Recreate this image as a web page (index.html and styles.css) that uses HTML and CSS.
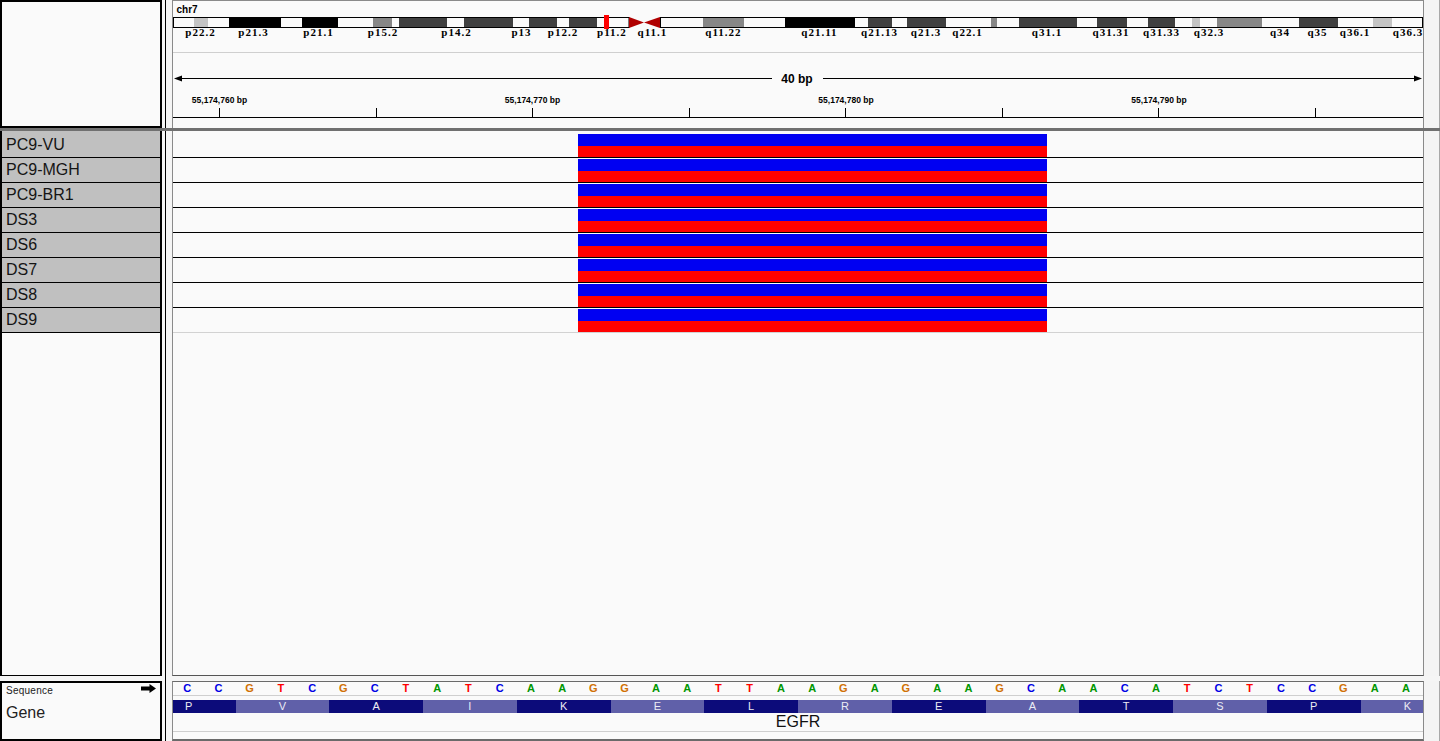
FILE: index.html
```html
<!DOCTYPE html>
<html lang="en">
<head>
<meta charset="utf-8">
<title>IGV - chr7 EGFR</title>
<link rel="stylesheet" href="styles.css">
</head>
<body>
<div class="igv">
  <!-- header row -->
  <div class="name-box header-names"></div>
  <div class="attr"></div>
  <div class="data-box header-data">
    <svg class="header-svg" width="1250" height="127" viewBox="173 1 1250 127" xmlns="http://www.w3.org/2000/svg">
      <text class="chr-label" x="176.5" y="13">chr7</text>
      <g class="bands">
        <rect x="194" y="18" width="14" height="9" fill="#c4c4c4"/>
        <rect x="229" y="18" width="52" height="9" fill="#000"/>
        <rect x="302" y="18" width="36" height="9" fill="#000"/>
        <rect x="373" y="18" width="19" height="9" fill="#878787"/>
        <rect x="399" y="18" width="48" height="9" fill="#404040"/>
        <rect x="464" y="18" width="49" height="9" fill="#404040"/>
        <rect x="529" y="18" width="28" height="9" fill="#404040"/>
        <rect x="569" y="18" width="28" height="9" fill="#404040"/>
        <rect x="703" y="18" width="41" height="9" fill="#878787"/>
        <rect x="785" y="18" width="70" height="9" fill="#000"/>
        <rect x="868" y="18" width="24" height="9" fill="#404040"/>
        <rect x="907" y="18" width="39" height="9" fill="#404040"/>
        <rect x="991" y="18" width="6" height="9" fill="#878787"/>
        <rect x="1019" y="18" width="58" height="9" fill="#404040"/>
        <rect x="1097" y="18" width="30" height="9" fill="#404040"/>
        <rect x="1148" y="18" width="27" height="9" fill="#404040"/>
        <rect x="1192" y="18" width="8" height="9" fill="#c4c4c4"/>
        <rect x="1217" y="18" width="45" height="9" fill="#878787"/>
        <rect x="1299" y="18" width="39" height="9" fill="#404040"/>
        <rect x="1373" y="18" width="19" height="9" fill="#c4c4c4"/>
      </g>
      <rect x="173.5" y="17.5" width="455.5" height="10" fill="none" stroke="#000"/>
      <rect x="660.5" y="17.5" width="762" height="10" fill="none" stroke="#000"/>
      <polygon points="629,17 629,28 644,22.5" fill="#b00000"/>
      <polygon points="660,17 660,28 644,22.5" fill="#b00000"/>
      <rect x="604" y="15" width="5" height="14" fill="#ff0000"/>
      <g class="band-label">
        <text x="200.5" y="36">p22.2</text>
        <text x="253.5" y="36">p21.3</text>
        <text x="318.5" y="36">p21.1</text>
        <text x="383" y="36">p15.2</text>
        <text x="456.5" y="36">p14.2</text>
        <text x="521.5" y="36">p13</text>
        <text x="563" y="36">p12.2</text>
        <text x="612" y="36">p11.2</text>
        <text x="652.5" y="36">q11.1</text>
        <text x="723.5" y="36">q11.22</text>
        <text x="819.5" y="36">q21.11</text>
        <text x="879.5" y="36">q21.13</text>
        <text x="926" y="36">q21.3</text>
        <text x="967.5" y="36">q22.1</text>
        <text x="1047" y="36">q31.1</text>
        <text x="1111" y="36">q31.31</text>
        <text x="1161.5" y="36">q31.33</text>
        <text x="1209" y="36">q32.3</text>
        <text x="1280" y="36">q34</text>
        <text x="1317.5" y="36">q35</text>
        <text x="1355" y="36">q36.1</text>
        <text x="1408" y="36">q36.3</text>
      </g>
      <line x1="173" y1="52.5" x2="1423" y2="52.5" stroke="#cfcfcf"/>
      <line x1="176" y1="78.5" x2="772" y2="78.5" stroke="#000"/>
      <line x1="823" y1="78.5" x2="1420" y2="78.5" stroke="#000"/>
      <polygon points="174,78.5 182,75.5 182,81.5" fill="#000"/>
      <polygon points="1422,78.5 1414,75.5 1414,81.5" fill="#000"/>
      <text class="span-label" x="797" y="82.5">40 bp</text>
      <g class="tick-label">
        <text x="219.5" y="102.5">55,174,760 bp</text>
        <text x="532.5" y="102.5">55,174,770 bp</text>
        <text x="846" y="102.5">55,174,780 bp</text>
        <text x="1159" y="102.5">55,174,790 bp</text>
      </g>
      <g stroke="#000">
        <line x1="219.5" y1="108" x2="219.5" y2="117"/>
        <line x1="376.5" y1="108" x2="376.5" y2="117"/>
        <line x1="532.5" y1="108" x2="532.5" y2="117"/>
        <line x1="689.5" y1="108" x2="689.5" y2="117"/>
        <line x1="845.5" y1="108" x2="845.5" y2="117"/>
        <line x1="1002.5" y1="108" x2="1002.5" y2="117"/>
        <line x1="1158.5" y1="108" x2="1158.5" y2="117"/>
        <line x1="1315.5" y1="108" x2="1315.5" y2="117"/>
        <line x1="173" y1="117.5" x2="1423" y2="117.5"/>
      </g>
    </svg>
  </div>
  <div class="scroll"></div>

  <div class="divider"></div>

  <!-- tracks row -->
  <div class="name-box track-names">
    <div class="track-label">PC9-VU</div>
    <div class="track-label">PC9-MGH</div>
    <div class="track-label">PC9-BR1</div>
    <div class="track-label">DS3</div>
    <div class="track-label">DS6</div>
    <div class="track-label">DS7</div>
    <div class="track-label">DS8</div>
    <div class="track-label">DS9</div>
  </div>
  <div class="attr"></div>
  <div class="data-box track-data">
    <div class="track-row"><div class="feature"><div class="f-top"></div><div class="f-bot"></div></div></div>
    <div class="track-row"><div class="feature"><div class="f-top"></div><div class="f-bot"></div></div></div>
    <div class="track-row"><div class="feature"><div class="f-top"></div><div class="f-bot"></div></div></div>
    <div class="track-row"><div class="feature"><div class="f-top"></div><div class="f-bot"></div></div></div>
    <div class="track-row"><div class="feature"><div class="f-top"></div><div class="f-bot"></div></div></div>
    <div class="track-row"><div class="feature"><div class="f-top"></div><div class="f-bot"></div></div></div>
    <div class="track-row"><div class="feature"><div class="f-top"></div><div class="f-bot"></div></div></div>
    <div class="track-row"><div class="feature"><div class="f-top"></div><div class="f-bot"></div></div></div>
  </div>
  <div class="scroll"></div>

  <!-- gap row -->
  <div class="gap"></div>
  <div class="attr"></div>
  <div class="gap"></div>
  <div class="gap"></div>

  <!-- feature row -->
  <div class="name-box feature-names">
    <div class="seq-name">
      <span class="seq-title">Sequence</span>
      <svg class="strand-arrow" width="15" height="9" viewBox="0 0 15 9" xmlns="http://www.w3.org/2000/svg"><path d="M0 2.5 H8.5 V0 L15 4.5 L8.5 9 V6.5 H0 Z" fill="#000"/></svg>
    </div>
    <div class="gene-title">Gene</div>
  </div>
  <div class="attr"></div>
  <div class="data-box feature-data">
    <div class="seq">
      <span class="nt-c">C</span><span class="nt-c">C</span><span class="nt-g">G</span><span class="nt-t">T</span><span class="nt-c">C</span><span class="nt-g">G</span><span class="nt-c">C</span><span class="nt-t">T</span><span class="nt-a">A</span><span class="nt-t">T</span>
      <span class="nt-c">C</span><span class="nt-a">A</span><span class="nt-a">A</span><span class="nt-g">G</span><span class="nt-g">G</span><span class="nt-a">A</span><span class="nt-a">A</span><span class="nt-t">T</span><span class="nt-t">T</span><span class="nt-a">A</span>
      <span class="nt-a">A</span><span class="nt-g">G</span><span class="nt-a">A</span><span class="nt-g">G</span><span class="nt-a">A</span><span class="nt-a">A</span><span class="nt-g">G</span><span class="nt-c">C</span><span class="nt-a">A</span><span class="nt-a">A</span>
      <span class="nt-c">C</span><span class="nt-a">A</span><span class="nt-t">T</span><span class="nt-c">C</span><span class="nt-t">T</span><span class="nt-c">C</span><span class="nt-c">C</span><span class="nt-g">G</span><span class="nt-a">A</span><span class="nt-a">A</span>
    </div>
    <div class="gene-bar">
      <div class="codons">
        <span class="aa dark">P</span><span class="aa light">V</span><span class="aa dark">A</span><span class="aa light">I</span><span class="aa dark">K</span><span class="aa light">E</span><span class="aa dark">L</span><span class="aa light">R</span><span class="aa dark">E</span><span class="aa light">A</span><span class="aa dark">T</span><span class="aa light">S</span><span class="aa dark">P</span><span class="aa light">K</span>
      </div>
    </div>
    <div class="gene-name">EGFR</div>
  </div>
  <div class="scroll"></div>
</div>
</body>
</html>
```

FILE: styles.css
```css
* { box-sizing: border-box; }

html, body {
  margin: 0;
  padding: 0;
}

body {
  width: 1440px;
  height: 741px;
  overflow: hidden;
  background: #f5f5f5;
  font-family: "Liberation Sans", Arial, sans-serif;
  color: #111;
}

.igv {
  display: grid;
  grid-template-columns: 162px 10px 1252px 16px;
  grid-template-rows: 128px 3px 545px 5px 60px;
  width: 1440px;
  height: 741px;
}

/* panels */
.name-box {
  background: #fafafa;
  border-left: 2px solid #000;
  border-right: 2px solid #000;
}

.header-names {
  border-top: 2px solid #000;
  border-bottom: 2px solid #000;
}

.attr {
  background: linear-gradient(to right, transparent 3px, #000 3px, #000 4px, transparent 4px);
}

.data-box {
  background: #fafafa;
  border-left: 1px solid #8a8a8a;
  border-right: 1px solid #8a8a8a;
}

.header-data {
  border-top: 1px solid #8a8a8a;
}

.header-svg {
  display: block;
}

.scroll {
  background: #f4f4f4;
  border-right: 1px solid #a8a8a8;
}

.divider {
  grid-column: 1 / -1;
  background: #707070;
}

.gap {
  background: #f5f5f5;
}

/* svg text */
.chr-label {
  font: bold 10px "Liberation Sans", Arial, sans-serif;
  fill: #000;
}

.band-label text {
  font: bold 11px "Liberation Serif", "Times New Roman", serif;
  letter-spacing: 1px;
  text-anchor: middle;
  fill: #000;
}

.span-label {
  font: bold 12px "Liberation Sans", Arial, sans-serif;
  text-anchor: middle;
  fill: #000;
}

.tick-label text {
  font: bold 8.5px "Liberation Sans", Arial, sans-serif;
  text-anchor: middle;
  fill: #000;
}

/* tracks */
.track-names {
  border-bottom: 1px solid #000;
}

.track-label {
  height: 25px;
  background: #c0c0c0;
  border-bottom: 1px solid #000;
  padding-left: 4px;
  font-size: 16px;
  line-height: 23px;
  color: #151515;
  white-space: nowrap;
}

.track-label:first-child {
  height: 27px;
  padding-top: 2px;
}

.track-data {
  border-bottom: 1px solid #555;
  padding-top: 2px;
}

.track-row {
  height: 25px;
  padding-top: 1px;
  border-bottom: 1px solid #000;
}

.track-row:last-child {
  border-bottom-color: #d2d2d2;
}

.feature {
  margin-left: 405px;
  width: 469px;
}

.f-top {
  height: 12px;
  background: #0000f2;
}

.f-bot {
  height: 11px;
  background: #ff0000;
}

/* bottom feature panel */
.feature-names {
  border: 2px solid #000;
  padding: 2px 4px 0 4px;
}

.seq-name {
  display: flex;
  justify-content: space-between;
  align-items: flex-start;
  height: 12px;
}

.seq-title {
  font-size: 10px;
  line-height: 12px;
  letter-spacing: 0.25px;
  color: #222;
}

.strand-arrow {
  display: block;
  margin-top: -1px;
}

.gene-title {
  margin-top: 6px;
  font-size: 16px;
  line-height: 20px;
  color: #222;
}

.feature-data {
  border-top: 1px solid #6a6a6a;
  border-bottom: 2px solid #6a6a6a;
}

.seq {
  display: grid;
  grid-template-columns: repeat(40, 1fr);
  height: 14px;
  border-bottom: 1px solid #cfcfcf;
  font: bold 11px/13px "Liberation Sans", Arial, sans-serif;
  text-align: center;
}

.seq span {
  padding-right: 3px;
}

.nt-a { color: #009600; }
.nt-c { color: #0000e6; }
.nt-g { color: #d17105; }
.nt-t { color: #ff0000; }

.gene-bar {
  margin-top: 4px;
  height: 13px;
  overflow: hidden;
}

.codons {
  display: grid;
  grid-template-columns: repeat(14, 1fr);
  width: 1312.5px;
  margin-left: -31.25px;
  height: 13px;
}

.aa {
  text-align: center;
  font-size: 11px;
  line-height: 13px;
  color: #ececf4;
}

.aa.dark { background: #0c0b7a; }
.aa.light { background: #6060a9; }

.gene-name {
  height: 19px;
  border-bottom: 1px solid #cfcfcf;
  font-size: 16px;
  line-height: 18px;
  text-align: center;
  color: #111;
}
```
